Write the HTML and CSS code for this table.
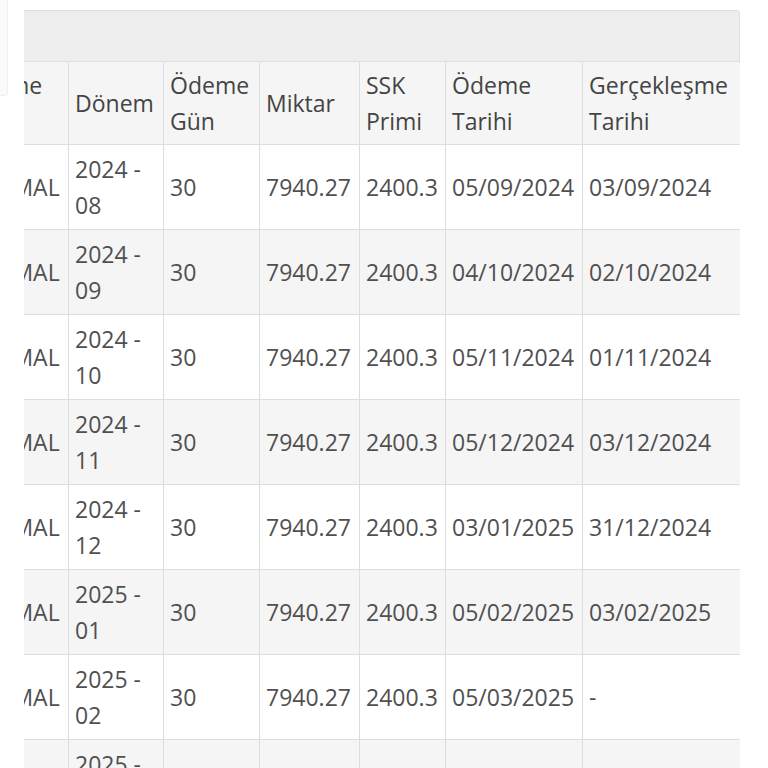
FILE: index.html
```html
<!DOCTYPE html>
<html lang="tr">
<head>
<meta charset="utf-8">
<link rel="stylesheet" href="styles.css">
</head>
<body>
<div class="page">
  <div class="side-strip"></div>
  <div class="panel-wrap">
    <div class="panel-head"></div>
    <div class="table-clip">
      <table class="pay-table">
        <colgroup>
          <col class="c-type"><col class="c-period"><col class="c-days"><col class="c-amount"><col class="c-ssk"><col class="c-date"><col class="c-real">
        </colgroup>
        <thead>
          <tr><th>Ödeme Tipi</th><th>Dönem</th><th>Ödeme Gün</th><th>Miktar</th><th>SSK Primi</th><th>Ödeme Tarihi</th><th>Gerçekleşme Tarihi</th></tr>
        </thead>
        <tbody>
          <tr><td>NORMAL</td><td>2024 - 08</td><td>30</td><td>7940.27</td><td>2400.3</td><td>05/09/2024</td><td>03/09/2024</td></tr>
          <tr><td>NORMAL</td><td>2024 - 09</td><td>30</td><td>7940.27</td><td>2400.3</td><td>04/10/2024</td><td>02/10/2024</td></tr>
          <tr><td>NORMAL</td><td>2024 - 10</td><td>30</td><td>7940.27</td><td>2400.3</td><td>05/11/2024</td><td>01/11/2024</td></tr>
          <tr><td>NORMAL</td><td>2024 - 11</td><td>30</td><td>7940.27</td><td>2400.3</td><td>05/12/2024</td><td>03/12/2024</td></tr>
          <tr><td>NORMAL</td><td>2024 - 12</td><td>30</td><td>7940.27</td><td>2400.3</td><td>03/01/2025</td><td>31/12/2024</td></tr>
          <tr><td>NORMAL</td><td>2025 - 01</td><td>30</td><td>7940.27</td><td>2400.3</td><td>05/02/2025</td><td>03/02/2025</td></tr>
          <tr><td>NORMAL</td><td>2025 - 02</td><td>30</td><td>7940.27</td><td>2400.3</td><td>05/03/2025</td><td>-</td></tr>
          <tr><td>NORMAL</td><td>2025 - 03</td><td>30</td><td>7940.27</td><td>2400.3</td><td>04/04/2025</td><td>-</td></tr>
        </tbody>
      </table>
    </div>
  </div>
</div>
</body>
</html>
```

FILE: styles.css
```css
html, body {
  margin: 0;
  padding: 0;
  background: #fff;
}
body {
  font-family: "Open Sans", "Noto Sans", sans-serif;
  font-size: 23px;
  color: #505050;
  overflow: hidden;
  height: 768px;
}
.page {
  display: flex;
  align-items: flex-start;
  gap: 16px;
}
.side-strip {
  width: 7px;
  height: 95px;
  background: #fafafa;
  border-right: 1px solid #f0f0f0;
  border-bottom: 1px solid #f0f0f0;
  border-bottom-right-radius: 3px;
}
.panel-wrap {
  width: 716px;
  margin-top: 10px;
  overflow: hidden;
}
.panel-head {
  height: 50px;
  background: #eeeeee;
  border: 1px solid #dddddd;
  border-bottom: none;
  border-left: none;
  border-top-right-radius: 4px;
}
.table-clip {
  overflow: hidden;
}
.pay-table {
  margin-left: -68px;
  width: 784px;
  border-collapse: collapse;
  table-layout: fixed;
  line-height: 36px;
}
.c-type { width: 112px; }
.c-period { width: 95px; }
.c-days { width: 96px; }
.c-amount { width: 100px; }
.c-ssk { width: 86px; }
.c-date { width: 137px; }
.c-real { width: 158px; }
.pay-table th,
.pay-table td {
  border: 1px solid #dddddd;
  padding: 6px 6px 6px 6px;
  text-align: left;
  vertical-align: middle;
  height: 72px;
  box-sizing: content-box;
  white-space: normal;
}
.pay-table th {
  font-weight: 400;
  color: #444;
  background: #f5f5f5;
  height: 70px;
  padding-top: 5px;
  padding-bottom: 5px;
}
.pay-table tbody tr:nth-child(even) td {
  background: #f5f5f5;
}
.pay-table tbody tr:nth-child(odd) td {
  background: #ffffff;
}
```
